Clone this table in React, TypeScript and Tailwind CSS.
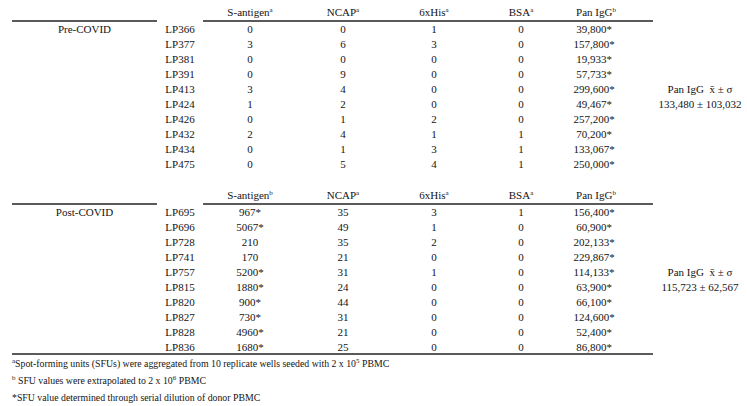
import React from "react";

type Section = {
  label: string;
  sHead: string;
  rows: [string, string, string, string, string, string][];
  mean: string;
};

const sections: Section[] = [
  {
    label: "Pre-COVID",
    sHead: "a",
    mean: "133,480 ± 103,032",
    rows: [
      ["LP366", "0", "0", "1", "0", "39,800*"],
      ["LP377", "3", "6", "3", "0", "157,800*"],
      ["LP381", "0", "0", "0", "0", "19,933*"],
      ["LP391", "0", "9", "0", "0", "57,733*"],
      ["LP413", "3", "4", "0", "0", "299,600*"],
      ["LP424", "1", "2", "0", "0", "49,467*"],
      ["LP426", "0", "1", "2", "0", "257,200*"],
      ["LP432", "2", "4", "1", "1", "70,200*"],
      ["LP434", "0", "1", "3", "1", "133,067*"],
      ["LP475", "0", "5", "4", "1", "250,000*"],
    ],
  },
  {
    label: "Post-COVID",
    sHead: "b",
    mean: "115,723 ± 62,567",
    rows: [
      ["LP695", "967*", "35", "3", "1", "156,400*"],
      ["LP696", "5067*", "49", "1", "0", "60,900*"],
      ["LP728", "210", "35", "2", "0", "202,133*"],
      ["LP741", "170", "21", "0", "0", "229,867*"],
      ["LP757", "5200*", "31", "1", "0", "114,133*"],
      ["LP815", "1880*", "24", "0", "0", "63,900*"],
      ["LP820", "900*", "44", "0", "0", "66,100*"],
      ["LP827", "730*", "31", "0", "0", "124,600*"],
      ["LP828", "4960*", "21", "0", "0", "52,400*"],
      ["LP836", "1680*", "25", "0", "0", "86,800*"],
    ],
  },
];

function Sup({ children }: { children: React.ReactNode }) {
  return <span className="relative -top-[4px] text-[7px] align-baseline">{children}</span>;
}

function HeaderRow({ s }: { s: string }) {
  const rule = "border-b-2 border-[#5a5a5a]";
  return (
    <div className="flex h-[22px] items-end">
      <div className={`w-[145px] h-full ${rule}`} />
      <div className="w-[46px] h-full" />
      <div className={`w-[94px] h-full flex items-end justify-center ${rule}`}>
        <span>S-antigen<Sup>{s}</Sup></span>
      </div>
      <div className={`w-[92px] h-full flex items-end justify-center ${rule}`}>
        <span>NCAP<Sup>a</Sup></span>
      </div>
      <div className={`w-[90px] h-full flex items-end justify-center ${rule}`}>
        <span>6xHis<Sup>a</Sup></span>
      </div>
      <div className={`w-[84px] h-full flex items-end justify-center ${rule}`}>
        <span>BSA<Sup>a</Sup></span>
      </div>
      <div className={`w-[90px] h-full flex items-end justify-center pr-[24px] ${rule}`}>
        <span>Pan IgG<Sup>b</Sup></span>
      </div>
    </div>
  );
}

function TableSection({ sec, last }: { sec: Section; last?: boolean }) {
  return (
    <div>
      <HeaderRow s={sec.sHead} />
      {sec.rows.map((r, i) => {
        const bottom = last && i === sec.rows.length - 1 ? "border-b-2 border-[#5a5a5a]" : "";
        return (
          <div key={r[0]} className="flex h-[15px] leading-[15px]">
            <div className={`w-[145px] text-center ${bottom}`}>{i === 0 ? sec.label : ""}</div>
            <div className={`w-[46px] text-center ${bottom}`}>{r[0]}</div>
            <div className={`w-[94px] text-center ${bottom}`}>{r[1]}</div>
            <div className={`w-[92px] text-center ${bottom}`}>{r[2]}</div>
            <div className={`w-[90px] text-center ${bottom}`}>{r[3]}</div>
            <div className={`w-[84px] text-center ${bottom}`}>{r[4]}</div>
            <div className={`w-[90px] text-center pr-[28px] ${bottom}`}>{r[5]}</div>
            <div className="w-[94px] text-center whitespace-pre">
              {i === 4 ? "Pan IgG  x\u0304 ± σ" : i === 5 ? sec.mean : ""}
            </div>
          </div>
        );
      })}
    </div>
  );
}

export default function App() {
  return (
    <div className="w-[747px] h-[406px] bg-white pl-[12px] text-[11px] text-[#141414] font-['Liberation_Serif',serif] overflow-hidden">
      <TableSection sec={sections[0]} />
      <div className="h-[11px]" />
      <TableSection sec={sections[1]} last />
      <div className="text-[9.8px] leading-[15px] pt-[1px]">
        <p>
          <Sup>a</Sup>Spot-forming units (SFUs) were aggregated from 10 replicate wells seeded with 2 x 10<Sup>5</Sup> PBMC
        </p>
        <p>
          <Sup>b</Sup> SFU values were extrapolated to 2 x 10<Sup>6</Sup> PBMC
        </p>
        <p>*SFU value determined through serial dilution of donor PBMC</p>
      </div>
    </div>
  );
}
